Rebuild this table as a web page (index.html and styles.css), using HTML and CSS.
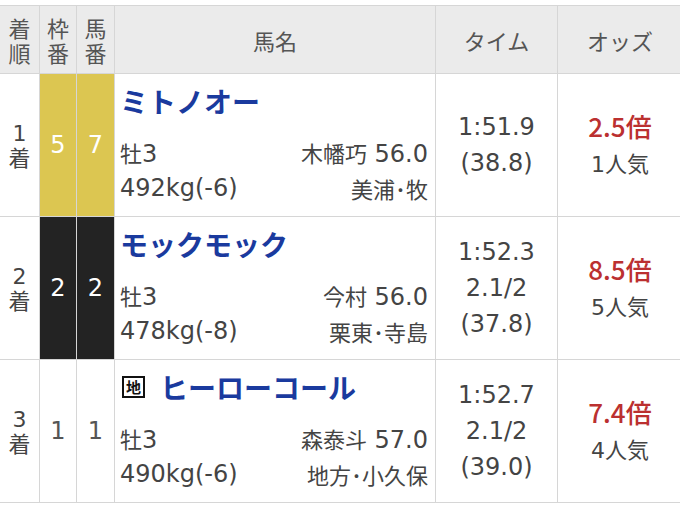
FILE: index.html
```html
<!DOCTYPE html>
<html lang="ja">
<head>
<meta charset="utf-8">
<link rel="stylesheet" href="styles.css">
</head>
<body>
<div class="table">
  <div class="hd c-stack"><span>着</span><span>順</span></div>
  <div class="hd c-stack"><span>枠</span><span>番</span></div>
  <div class="hd c-stack"><span>馬</span><span>番</span></div>
  <div class="hd">馬名</div>
  <div class="hd">タイム</div>
  <div class="hd">オッズ</div>

  <div class="rank"><span>1</span><span class="j">着</span></div>
  <div class="num waku5">5</div>
  <div class="num waku5">7</div>
  <div class="horse">
    <div class="hname">ミトノオー</div>
    <div class="info"><span><span class="j">牡</span>3</span><span><span class="j">木幡巧</span> 56.0</span></div>
    <div class="info"><span>492kg(-6)</span><span class="j">美浦･牧</span></div>
  </div>
  <div class="time"><span>1:51.9</span><span>(38.8)</span></div>
  <div class="odds"><span class="ratio">2.5倍</span><span>1<span class="j">人気</span></span></div>

  <div class="rank"><span>2</span><span class="j">着</span></div>
  <div class="num waku2">2</div>
  <div class="num waku2">2</div>
  <div class="horse">
    <div class="hname">モックモック</div>
    <div class="info"><span><span class="j">牡</span>3</span><span><span class="j">今村</span> 56.0</span></div>
    <div class="info"><span>478kg(-8)</span><span class="j">栗東･寺島</span></div>
  </div>
  <div class="time"><span>1:52.3</span><span>2.1/2</span><span>(37.8)</span></div>
  <div class="odds"><span class="ratio">8.5倍</span><span>5<span class="j">人気</span></span></div>

  <div class="rank"><span>3</span><span class="j">着</span></div>
  <div class="num waku1">1</div>
  <div class="num waku1">1</div>
  <div class="horse">
    <div class="hname"><span class="chiho">地</span>ヒーローコール</div>
    <div class="info"><span><span class="j">牡</span>3</span><span><span class="j">森泰斗</span> 57.0</span></div>
    <div class="info"><span>490kg(-6)</span><span class="j">地方･小久保</span></div>
  </div>
  <div class="time"><span>1:52.7</span><span>2.1/2</span><span>(39.0)</span></div>
  <div class="odds"><span class="ratio">7.4倍</span><span>4<span class="j">人気</span></span></div>
</div>
</body>
</html>
```
FILE: styles.css
```css
html, body {
  margin: 0;
  padding: 0;
  background: #fff;
}
body {
  font-family: "DejaVu Sans", "Noto Sans CJK JP", sans-serif;
  color: #444;
}
.j {
  font-family: "Noto Sans CJK JP", sans-serif;
  font-size: 22px;
}
.table {
  margin-top: 5px;
  display: grid;
  grid-template-columns: 39px 36px 37px 320px 121px 124px;
  grid-template-rows: 67px 142px 142px 142px;
  gap: 1px;
  background: #d6d6d6;
  border-top: 1px solid #d6d6d6;
  border-bottom: 1px solid #d6d6d6;
  width: 680px;
}
.hd {
  background: #ebebeb;
  color: #555;
  display: flex;
  align-items: center;
  justify-content: center;
  font-family: "Noto Sans CJK JP", sans-serif;
  font-size: 22px;
}
.c-stack {
  flex-direction: column;
  line-height: 25px;
}
.rank {
  background: #fff;
  display: flex;
  flex-direction: column;
  align-items: center;
  justify-content: center;
  font-size: 22px;
  line-height: 23px;
  color: #444;
}
.num {
  display: flex;
  align-items: center;
  justify-content: center;
  font-size: 24px;
}
.waku5 { background: #dcc651; color: #fff; }
.waku2 { background: #232323; color: #fff; }
.waku1 { background: #fff; color: #555; }
.horse {
  background: #fff;
  padding: 11px 7px 0 5px;
  display: flex;
  flex-direction: column;
}
.hname {
  color: #1a3a9e;
  font-family: "Noto Sans CJK JP", sans-serif;
  font-size: 28px;
  font-weight: 700;
  line-height: 32px;
  margin-bottom: 18px;
  display: flex;
  align-items: center;
}
.chiho {
  font-size: 15px;
  font-weight: 700;
  color: #111;
  border: 2px solid #111;
  width: 19px;
  height: 18px;
  line-height: 18px;
  text-align: center;
  margin-right: 15px;
  margin-left: 2px;
}
.info {
  display: flex;
  justify-content: space-between;
  font-size: 24px;
  line-height: 34px;
  color: #444;
}
.time, .odds {
  background: #fff;
  display: flex;
  flex-direction: column;
  align-items: center;
  justify-content: center;
  font-size: 24px;
  line-height: 36px;
  color: #444;
}
.odds { font-size: 22px; }
.ratio {
  color: #bb3030;
  font-family: "Noto Sans CJK JP", sans-serif;
  font-size: 26px;
  font-weight: 500;
}
```
